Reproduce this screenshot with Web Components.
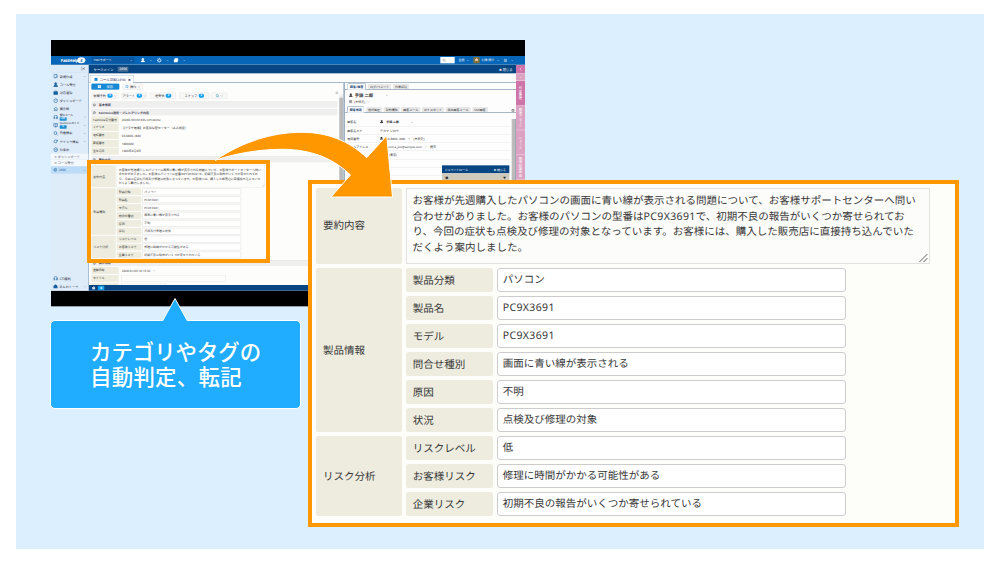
<!DOCTYPE html>
<html>
<head>
<meta charset="utf-8">
<title>カテゴリやタグの自動判定、転記</title>
<style>
    body {
        margin: 0;
        width: 1000px;
        height: 563px;
        overflow: hidden;
        background: #fff;
        font-family: "Noto Sans", "Noto Sans CJK JP", sans-serif;
    }
</style>
</head>
<body>
<help-scene>
    <app-window slot="window"></app-window>
    <small-frame slot="mark"></small-frame>
    <zoom-frame slot="zoom"><product-form></product-form></zoom-frame>
    <flow-arrow slot="arrow"></flow-arrow>
    <speech-callout slot="callout"><div>カテゴリやタグの</div><div style="letter-spacing:.3px">自動判定、転記</div></speech-callout>
</help-scene>

<script>
function define(name, html, init) {
    customElements.define(name, class extends HTMLElement {
        connectedCallback() {
            if (this.shadowRoot) return;
            const shadow = this.attachShadow({mode: "open"});
            shadow.innerHTML = html;
        }
    });
}

// 16x16 icons
const ICONS = {
    edit: '<path d="M13 7V2H2v11h5M8 12l5-5 2 2-5 5H8z"/>',
    user: '<circle cx="8" cy="4.5" r="3.5" fill="currentColor"/><path fill="currentColor" d="M1 15c0-8 14-8 14 0z"/>',
    bag: '<path fill="currentColor" d="M1 5h14v9H1z"/><path d="M5 5V2h6v3"/>',
    gauge: '<circle cx="8" cy="8" r="6.5"/><path d="M8 8l3-3M4 8h1M8 4v1"/>',
    board: '<path d="M2 7l6-5 6 5M3 7v7h10V7M6 10h4"/>',
    phones: '<path d="M2 10V8a6 6 0 0 1 12 0v2M2 9h3v5H2zM11 9h3v5h-3z"/>',
    screen: '<path d="M1 2h14v9H1zM5 14h6M8 11v3M5 6h6"/>',
    search: '<circle cx="7" cy="7" r="5"/><path d="M11 11l4 4"/>',
    cycle: '<path d="M3 8a5 5 0 0 1 9-3l2 2M14 3v4h-4M13 9a5 5 0 0 1-9 2L2 9v4"/>',
    dots: '<circle cx="8" cy="8" r="6.5"/><path d="M4 8h8"/>',
    gear: '<circle cx="8" cy="8" r="4.5"/><path stroke-width="3" d="M8 0v3M8 13v3M0 8h3M13 8h3M2.5 2.5l2 2M11.5 11.5l2 2M2.5 13.5l2-2M11.5 4.5l2-2"/>',
    mail: '<path fill="currentColor" d="M1 6l7-5 7 5v8H1z"/>',
    folder: '<path fill="currentColor" d="M1 6h11v8H1zM4 2h11v9h-2V5H4z"/>',
    down: '<path d="M3 6l5 5 5-5"/>',
    circle: '<circle cx="8" cy="8" r="5.5"/><path d="M5 8h6"/>',
    save: '<path fill="currentColor" d="M1 1h14v14H1z"/><path stroke="#1789d4" d="M4 9h8M5 4h5"/>',
    card: '<path d="M2 1h12v14H2zM5 5h6M5 8h6M5 11h6"/>',
    left: '<path d="M11 2L5 8l6 6"/>',
    fold: '<path d="M3 1v14M13 3L8 8l5 5M6 8h7"/>'
};
function icon(name, size = 12, style = "") {
    return `<svg class="ic" width="${size}" height="${size}" viewBox="0 0 16 16" fill="none" stroke="currentColor" stroke-width="2" style="flex:none;${style}">${ICONS[name]}</svg>`;
}

define("help-scene", `
    <style>
        :host { display: block; box-sizing: border-box; width: 1000px; height: 563px; padding: 14px 16px; }
        .panel { height: 535px; background: #dbeffe; }
        /* layers that lie over one another */
        ::slotted(*) { position: absolute; }
        ::slotted([slot=window]) { left: 51px; top: 40px; }
        ::slotted([slot=mark]) { left: 87px; top: 160px; }
        ::slotted([slot=zoom]) { left: 308px; top: 180px; }
        ::slotted([slot=arrow]) { left: 200px; top: 120px; }
        ::slotted([slot=callout]) { left: 50px; top: 296px; }
    </style>
    <div class="panel">
        <slot name="window"></slot>
        <slot name="mark"></slot>
        <slot name="zoom"></slot>
        <slot name="arrow"></slot>
        <slot name="callout"></slot>
    </div>`);

define("small-frame", `
    <style>
        :host { display: block; box-sizing: border-box; width: 182.5px; height: 102.5px; border: 4px solid #ff9800; }
    </style>`);

define("zoom-frame", `
    <style>
        :host { display: block; box-sizing: border-box; width: 650.5px; height: 347px; border: 4px solid #ff9800;
            background: #fdfdfa; padding: 3.5px 4px; font-size: 10.5px; }
    </style>
    <slot></slot>`);

define("flow-arrow", `
    <style>
        :host { display: block; width: 200px; height: 85px; }
        svg { display: block; }
    </style>
    <svg width="200" height="85" viewBox="200 120 200 85">
        <path fill="#ff9800" stroke="#fff" stroke-width="1" stroke-linejoin="round"
            d="M215 160.300C242 142 272 132.300 302 132.300C328 132.300 350 141.500 366.700 157.700L386.700 135.700L392.500 197L331 197L350.500 175C334 159 312 149.300 282 149.300C262 149.300 238 152.500 215 160.300z"/>
    </svg>`);

define("speech-callout", `
    <style>
        :host { display: flex; flex-direction: column; width: 251px; }
        svg { display: block; margin: 0 0 -1.5px 111px; position: relative; z-index: 1; }
        .box { box-sizing: border-box; height: 89px; border: 1px solid #fff; border-radius: 5px; background: #20acff;
            color: #fff; font: 500 21.4px/25px "Noto Sans CJK JP", sans-serif; padding: 17px 0 0 39px; white-space: nowrap; }
    </style>
    <svg width="28" height="25" viewBox="0 0 28 25"><path d="M1.500 25L14 2.500L26.500 25" fill="#20acff" stroke="#fff"/></svg>
    <div class="box"><slot></slot></div>`);

// sizes are in em, so the same form serves the small window and the enlargement
const GROUPS = [
    ["製品情報", [["製品分類", "パソコン"], ["製品名", "PC9X3691"], ["モデル", "PC9X3691"],
        ["問合せ種別", "画面に青い線が表示される"], ["原因", "不明"], ["状況", "点検及び修理の対象"]]],
    ["リスク分析", [["リスクレベル", "低"], ["お客様リスク", "修理に時間がかかる可能性がある"],
        ["企業リスク", "初期不良の報告がいくつか寄せられている"]]]
];
define("product-form", `
    <style>
        :host { display: flex; flex-direction: column; gap: .37em; color: #383838; text-rendering: geometricPrecision; white-space: nowrap; }
        .group { display: grid; grid-template-columns: 8.23em 1fr; gap: .32em; }
        .th { display: flex; align-items: center; background: #edecdf; border-radius: .25em; padding-left: .66em; }
        .rows { display: flex; flex-direction: column; gap: .37em; }
        .row { display: grid; grid-template-columns: 8.28em 33.23em; gap: .38em; height: 2.297em; }
        .input { display: flex; align-items: center; box-sizing: border-box; background: #fff; border: .11em solid #ccc; border-radius: .3em; padding: 0 0 .12em .48em; }
        .area { display: flex; box-sizing: border-box; width: 49.9em; height: 7.31em; border: .1em solid #e2e2de; background: #fcfcfa; padding: .52em 0 0 .55em; line-height: 1.492em; }
        .area svg { width: .8em; height: .8em; margin: auto .1em .1em auto; }
        .en { letter-spacing: .035em; }
    </style>
    <div class="group">
        <div class="th">要約内容</div>
        <div class="area">
            <div>お客様が先週購入したパソコンの画面に青い線が表示される問題について、お客様サポートセンターへ問い<br>合わせがありました。お客様のパソコンの型番は<span class="en">PC9X3691</span>で、初期不良の報告がいくつか寄せられてお<br>り、今回の症状も点検及び修理の対象となっています。お客様には、購入した販売店に直接持ち込んでいた<br>だくよう案内しました。</div>
            <svg viewBox="0 0 8 8"><path d="M0 8L8 0M4 8L8 4" stroke="#888" fill="none"/></svg>
        </div>
    </div>
    ${GROUPS.map(([title, rows]) => `
        <div class="group">
            <div class="th">${title}</div>
            <div class="rows">${rows.map(([k, v]) => `
                <div class="row"><div class="th">${k}</div><div class="input${v[0] == "P" ? " en" : ""}">${v}</div></div>`).join("")}
            </div>
        </div>`).join("")}`);

// the window is laid out at three times its size and scaled down
define("app-window", `
    <style>
        :host { display: block; width: 474px; height: 266.500px; overflow: hidden; }
        .win { width: 1422px; height: 799px; display: flex; flex-direction: column; background: #000; transform: scale(.33333);
            transform-origin: 0 0; font-size: 9px; color: #333; text-rendering: geometricPrecision; white-space: nowrap; }
        .top { margin-top: 48px; height: 25px; background: #0766b8; color: #fff; display: flex; align-items: center; border-bottom: 2px solid #6495bf; flex: none; }
        .logo { width: 108px; box-sizing: border-box; padding-left: 29px; font-size: 13px; font-weight: 700; display: flex; align-items: center; letter-spacing: -.5px; }
        .logo i { background: #fff; color: #0766b8; border-radius: 50%; width: 24px; height: 18px; text-align: center; line-height: 17px; font-size: 12px; margin-left: -3px; flex: none; }
        .team { width: 129px; height: 19px; line-height: 18px; background: #0958a1; margin-left: 14px; padding: 0 6px; box-sizing: border-box; display: flex; justify-content: space-between; align-items: center; }
        .tools { display: flex; gap: 14px; align-items: center; margin-left: 18px; }
        .right { display: flex; gap: 12px; align-items: center; margin-left: auto; padding-right: 34px; }
        .find { width: 43px; height: 19px; background: #fff; color: #888; display: flex; align-items: center; padding-left: 6px; box-sizing: border-box; }
        .face { width: 19px; height: 19px; background: radial-gradient(circle at 50% 45%, #e8c49e 28%, #7d7140 32%); margin-right: -8px; }
        .body { display: flex; height: 677px; background: #fcfcfc; }
        .center { flex: 1; min-width: 0; display: flex; flex-direction: column; }
        .case { height: 25px; background: #074682; color: #fff; display: flex; align-items: center; padding: 0 10px 0 14px; gap: 12px; font-size: 10px; }
        .case b { background: #476d94; padding: 0 5px; border-radius: 2px; line-height: 15px; font-weight: 400; }
        .tabs { height: 27px; border-bottom: 2px solid #8197ad; display: flex; align-items: flex-end; padding-left: 2px; }
        .tab { height: 25px; width: 132px; box-sizing: border-box; border: 2px solid #6f91b0; border-bottom: 0; border-radius: 4px 4px 0 0; display: flex; align-items: center; gap: 6px; padding-left: 12px; font-size: 10px; color: #447; background: #fff; margin-bottom: -2px; }
        .split { flex: 1; min-height: 0; display: flex; overflow: hidden; }
        case-panel { width: 763px; }
        customer-panel { flex: 1; border-left: 5px solid #9db0c4; }
        .foot { height: 17px; background: #074682; display: flex; align-items: center; gap: 8px; padding-left: 9px; color: #cde; flex: none; }
        .foot b { background: #16a2ef; color: #fff; padding: 0 7px; line-height: 13px; border-radius: 3px; }
        .x { margin-left: auto; }
    </style>
    <div class="win">
        <div class="top">
            <div class="logo">FastHelp<i>5</i></div>
            <div class="team"><span>FMCサポート</span>${icon("down", 8)}</div>
            <div class="tools">${icon("user", 13)}${icon("down", 8)}${icon("gear", 14)}${icon("down", 8)}${icon("folder", 14)}${icon("down", 8)}</div>
            <div class="right"><div class="find">${icon("search", 11)}</div><span>全般</span>${icon("down", 8, "margin-left:-6px")}<div class="face"></div><span style="margin-left:2px">村瀬 陽介</span>${icon("down", 8, "margin-left:-4px")}${icon("card", 10)}${icon("down", 8)}</div>
        </div>
        <div class="body">
            <side-menu></side-menu>
            <div class="center">
                <div class="case"><span>ケースメイン</span><b>2496</b><span class="x">✖ 閉じる</span></div>
                <div class="tabs"><div class="tab">${icon("save", 10, "color:#1789d4")}<span>コール詳細(2496)</span><span>✖</span></div></div>
                <div class="split"><case-panel></case-panel><customer-panel></customer-panel></div>
                <div class="foot">${icon("mail", 10)}<b>0</b></div>
            </div>
            <side-rail></side-rail>
        </div>
    </div>`);

const MENU = [["edit", "新規作成", "", 1], ["user", "コール受付"], ["bag", "対応通知"], ["gauge", "ダッシュボード"], ["board", "掲示板"],
    ["phones", "受信コール", "0件", 1], ["screen", "FastVoiceガイド", "0", 1], ["search", "各種検索", "", 1], ["cycle", "クイック検索", "", 1], ["dots", "作業中"]];
define("side-menu", `
    <style>
        :host { display: flex; flex-direction: column; width: 114px; box-sizing: border-box; background: #deecf9; border-right: 2px solid #8ba8c5; color: #234; font-size: 9.500px; }
        .fold { height: 21px; display: flex; align-items: center; justify-content: flex-end; padding-right: 8px; color: #789; border-bottom: 1px solid #c7d9ea; }
        .item { height: 24.400px; display: flex; align-items: center; gap: 5px; padding: 0 7px; box-sizing: border-box; color: #17609c; }
        .item span { color: #223; line-height: 11px; }
        .item b { display: block; width: 21px; line-height: 10px; background: #1f8fd4; color: #fff; border-radius: 2px; font-size: 7px; text-align: center; }
        .item .n { font-size: 8px; line-height: 11px; }
        .ic:last-child { margin-left: auto; color: #778; }
        .sub { height: 18px; line-height: 18px; background: #f3f8fd; border-bottom: 1px solid #d8e4ee; padding-left: 10px; color: #555; }
        .now { height: 22px; background: #bcdcf8; display: flex; align-items: center; gap: 5px; padding: 0 7px; color: #17609c; }
        .space { flex: 1; }
    </style>
    <div class="fold">${icon("fold", 14)}</div>
    ${MENU.map(([i, t, n, d]) => `<div class="item">${icon(i, 14)}<span${n ? ' class="n"' : ""}>${t}${n ? `<b>${n}</b>` : ""}</span>${d ? icon("down", 8) : ""}</div>`).join("")}
    <div class="sub">✕ ダッシュボード</div>
    <div class="sub">✕ コール受付</div>
    <div class="now">${icon("gear", 11)}<span>2496</span>${icon("down", 8)}</div>
    <div class="space"></div>
    <div class="item">${icon("phones", 14)}<span>CTI接続</span></div>
    <div class="item">${icon("mail", 13)}<span>あんたトーク</span>${icon("down", 8)}</div>`);

const FIELDS = [["FastVoice受付番号", "20240703141435 mHnRxNv"], ["シナリオ", "【ブラザ電機】お客様保管センター（本人認証）"],
    ["電話番号", "03-4400-7840"], ["郵便番号", "1800000"], ["生年月日", "1900年4月4日"]];
const section = t => `<div class="sec">${icon("circle", 10)}${t}</div>`;
const field = ([k, v]) => `<div class="f"><span class="k">${k}</span><span>${v}</span></div>`;
define("case-panel", `
    <style>
        :host { display: flex; box-sizing: border-box; }
        .main { flex: 1; display: flex; flex-direction: column; padding: 2px 3px 0 7px; min-width: 0; background: #fdfdfb; }
        .main > * { flex: none; }
        .bar { display: flex; height: 18px; gap: 10px; }
        .btn { box-sizing: border-box; border: 1px solid #ddd; border-radius: 3px; background: #f8f8f8; display: flex; align-items: center; justify-content: center; gap: 4px; font-size: 9.500px; }
        .save { width: 84px; background: #1789d4; border-color: #1789d4; color: #fff; gap: 16px; }
        .btn b { background: #139ff0; color: #fff; border-radius: 5px; padding: 0 6px; line-height: 12px; font-size: 8px; }
        .gear { margin: -5px 0 0 auto; color: #999; }
        .sec { height: 18px; box-sizing: border-box; background: #efefef; border-top: 1px solid #ddd; display: flex; align-items: center; gap: 8px; padding-left: 4px; font-weight: 700; font-size: 9px; margin-top: 5px; margin-right: 3px; color: #445; }
        .f { display: flex; align-items: center; height: 21px; margin-top: 2.700px; gap: 9px; }
        .k { width: 82px; height: 21px; box-sizing: border-box; line-height: 21px; background: #edecdf; padding-left: 5px; font-size: 8.800px; letter-spacing: -.2px; }
        product-form { font-size: 8.910px; margin: 9px 0 0; height: 279px; }
        .line { border: 1px solid #ddd; width: 310px; height: 16px; }
        .scroll { width: 11px; background: #eee; margin-top: 34px; border-right: 1px solid #ccc; }
        .scroll i { display: block; height: 420px; margin-top: 10px; background: #bbb; }
    </style>
    <div class="main">
        <div class="bar" style="margin-bottom:9px"><div class="btn save">${icon("save", 10)}<span>保存</span></div><div class="btn" style="width:60px">${icon("edit", 10, "color:#1789d4")}操作 ${icon("down", 7)}</div></div>
        <div class="bar" style="margin-bottom:4px">
            <div class="btn" style="width:81px">依頼予約<b>0</b>${icon("down", 7)}</div>
            <div class="btn" style="width:75px">アラート<b>0</b>${icon("down", 7)}</div>
            <div class="btn" style="width:78px">送受信<b>0</b></div>
            <div class="btn" style="width:90px">スナップ<b>0</b></div>
            <div class="btn" style="width:49px;margin-left:-5px">${icon("search", 11, "color:#1789a4")}${icon("down", 7)}</div>
            <div class="gear">${icon("gear", 9)}</div>
        </div>
        ${section("基本情報")}${section("FastVoice連携・プレヒアリング内容")}
        ${FIELDS.map(field).join("")}
        ${section("要約内容")}
        <product-form></product-form>
        ${section("案件情報")}
        ${field(["登録日時", "2024/07/03 14:13:32　" + icon("down", 7)])}
        ${field(["タイトル", '<div class="line"></div>'])}
        ${field(["", '<div class="line" style="width:130px"></div>'])}
    </div>
    <div class="scroll"><i></i></div>`);

const DETAILS = [["顧客名", "<b>" + icon("user", 10) + "　手錦 二郎</b>　　　　" + icon("down", 7)], ["顧客名カナ", "テカマ ジロウ"], ["電話番号", icon("user", 9) + "　03-4400-7840　" + icon("down", 7) + "　[未設定]"],
    ["メールアドレス", "　　temma_jiro@sample.com　" + icon("down", 7) + "　携帯"], ["住所", "　　　(東京)"], ["性別", ""], ["備考", "　　)"]];
define("customer-panel", `
    <style>
        :host { display: block; box-sizing: border-box; background: #fdfdfd; }
        .tabs { display: flex; align-items: flex-end; gap: 6px; height: 20px; border-bottom: 2px solid #7994ae; padding-left: 7px; box-sizing: border-box; }
        .tabs span { height: 15px; line-height: 15px; padding: 0 6px; background: #e8e8e8; font-size: 9px; }
        .tabs .on { background: #fff; border: 2px solid #7994ae; border-bottom: 0; border-radius: 3px 3px 0 0; font-weight: 700; color: #247; margin-bottom: -2px; height: 17px; }
        .name { display: flex; align-items: center; gap: 6px; height: 21px; padding: 6px 0 0 12px; font-size: 13px; font-weight: 700; }
        .sub { display: flex; align-items: center; gap: 6px; height: 18px; padding-left: 12px; }
        .wrap { display: flex; }
        .rows { width: 491px; padding: 17px 0 0 5px; }
        .row { height: 23.600px; display: grid; grid-template-columns: 98px 1fr; align-items: center; border-bottom: 1px solid #ddd; padding-left: 2px; box-sizing: content-box; }
        .row b { font-weight: 700; }
        .scroll { width: 11px; height: 510px; background: #bbb; margin: 19px 0 0 auto; border-right: 2px solid #8ba0b5; }
        .tabs.wide { gap: 5px; padding-left: 6px; margin-top: 4px; padding-right: 4px; }
        /* floating window over the rows */
        .cti { position: absolute; left: 1173px; top: 376px; width: 202px; color: #fff; }
        .cti div { height: 24px; box-sizing: border-box; background: #074682; display: flex; justify-content: space-between; align-items: center; padding: 0 10px; }
        .cti div + div { background: #cfcabb; color: #333; }
    </style>
    <div class="tabs"><span class="on">顧客/履歴</span><span>ログ/コメント</span><span>作業状況</span></div>
    <div class="name">${icon("user", 11)}手錦 二郎<i style="width:26px"></i>${icon("down", 7)}</div>
    <div class="sub">${icon("card", 10)}<span>[未設定]</span>${icon("down", 7)}</div>
    <div class="tabs wide"><span class="on">顧客情報</span><span>他所属歴</span><span>契約情報</span><span>顧客メール</span><span>ポイスポット</span><span>検出顧客メール</span><span>SNS顧客</span>${icon("gear", 10, "margin-left:auto")}</div>
    <div class="wrap">
        <div class="rows">${DETAILS.map(([k, v]) => `<div class="row"><span>${k}</span><span>${v}</span></div>`).join("")}</div>
        <div class="scroll"></div>
    </div>
    <div class="cti"><div><span>CTIコントロール</span><span>✖ 閉じる</span></div><div><span>■</span><span>▼</span></div></div>`);

define("side-rail", `
    <style>
        :host { display: flex; flex-direction: column; width: 27px; background: #dba2c2; color: #fff; }
        div { box-sizing: border-box; border-bottom: 2px solid #eccbdd; display: flex; align-items: center; justify-content: center; writing-mode: vertical-rl; font-size: 10px; height: 74px; }
    </style>
    <div style="height:26px;background:#cf74a8">${icon("left", 12)}</div>
    <div style="height:22px">${icon("down", 9)}</div>
    <div style="background:#cf74a8">作業履歴</div>
    <div>関連アラート</div>
    <div>ニュース</div>
    <div>関連知識検索</div>`);
</script>
</body>
</html>
